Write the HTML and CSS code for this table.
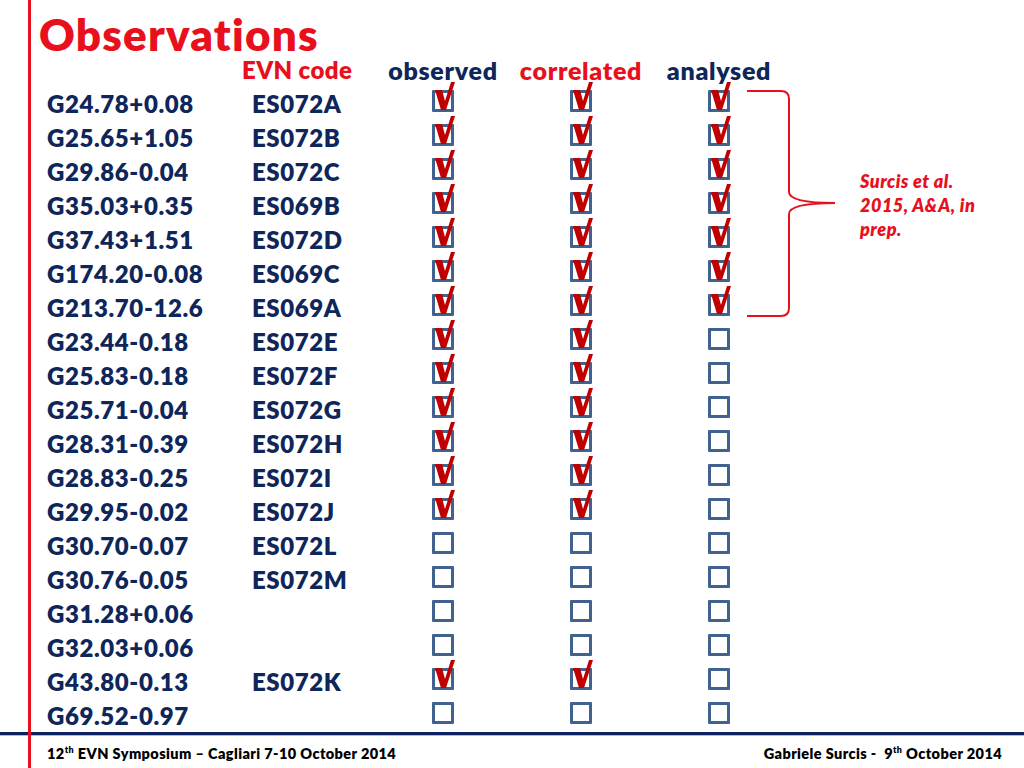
FILE: index.html
```html
<!DOCTYPE html>
<html>
<head>
<meta charset="utf-8">
<link rel="stylesheet" href="styles.css">
</head>
<body>
<div class="slide">
  <div class="redline"></div>
  <main class="content">
    <h1 class="title">Observations</h1>
    <div class="table">
      <div class="hd name"></div>
      <div class="hd code red evn">EVN code</div>
      <div class="hd c1">observed</div>
      <div class="hd c2 red">correlated</div>
      <div class="hd c3">analysed</div>

      <div class="note">
        <svg class="brace" width="90" height="238" viewBox="0 0 90 238">
          <path d="M0,5 H34 Q42,5 42,13 V106 Q42,117 88,117 Q42,117 42,128 V222 Q42,230 34,230 H0" fill="none" stroke="#e8101c" stroke-width="2"/>
        </svg>
        <p class="ref">Surcis et al.<br>2015, A&amp;A, in<br>prep.</p>
      </div>
    </div>
  </main>
  <footer class="footer">
    <span>12<sup>th</sup> EVN Symposium – Cagliari 7-10 October 2014</span>
    <span>Gabriele Surcis -&nbsp; 9<sup>th</sup> October 2014</span>
  </footer>
</div>
<script src="app.js"></script>
</body>
</html>
```
FILE: app.js
```js
const rows = [
  ["G24.78+0.08","ES072A",1,1,1],
  ["G25.65+1.05","ES072B",1,1,1],
  ["G29.86-0.04","ES072C",1,1,1],
  ["G35.03+0.35","ES069B",1,1,1],
  ["G37.43+1.51","ES072D",1,1,1],
  ["G174.20-0.08","ES069C",1,1,1],
  ["G213.70-12.6","ES069A",1,1,1],
  ["G23.44-0.18","ES072E",1,1,0],
  ["G25.83-0.18","ES072F",1,1,0],
  ["G25.71-0.04","ES072G",1,1,0],
  ["G28.31-0.39","ES072H",1,1,0],
  ["G28.83-0.25","ES072I",1,1,0],
  ["G29.95-0.02","ES072J",1,1,0],
  ["G30.70-0.07","ES072L",0,0,0],
  ["G30.76-0.05","ES072M",0,0,0],
  ["G31.28+0.06","",0,0,0],
  ["G32.03+0.06","",0,0,0],
  ["G43.80-0.13","ES072K",1,1,0],
  ["G69.52-0.97","",0,0,0]
];
const table = document.querySelector('.table');
const check = '<svg class="tick" width="20" height="28" viewBox="0 0 20 28"><polygon points="0,8 7,8 10,19 16,0 20,0 11,28 6,28" fill="#c00000"/></svg>';
rows.forEach(r => {
  let html = `<div class="cell name">${r[0]}</div><div class="cell code">${r[1]}</div>`;
  for (let i = 0; i < 3; i++) {
    html += `<div class="cell c${i+1}"><span class="box">${r[2+i] ? check : ''}</span></div>`;
  }
  table.insertAdjacentHTML('beforeend', html);
});
```
FILE: styles.css
```css
html, body {
  margin: 0;
  padding: 0;
  background: #fff;
}
.slide {
  position: relative;
  width: 1024px;
  height: 768px;
  overflow: hidden;
  font-family: Lato, "Open Sans", sans-serif;
  font-weight: 800;
  color: #0e2659;
  display: flex;
  flex-direction: column;
}
.redline {
  position: absolute;
  left: 28px;
  top: 0;
  width: 3px;
  height: 768px;
  background: #e8101c;
  z-index: 2;
}
.content {
  padding-left: 47px;
  height: 732px;
}
.title {
  margin: 15px 0 0 -8px;
  height: 45px;
  font-size: 44px;
  line-height: 38px;
  font-weight: 800;
  color: #e8101c;
  letter-spacing: 1.2px;
  white-space: nowrap;
}
.table {
  display: grid;
  grid-template-columns: 205px 122px 138px 138px 138px 1fr;
  grid-template-rows: 26px;
  grid-auto-rows: 34px;
  font-size: 24px;
  letter-spacing: 0.6px;
}
.hd {
  font-size: 25px;
  line-height: 20px;
  letter-spacing: 0.7px;
  white-space: nowrap;
}
.red { color: #e8101c; }
.evn {
  margin-left: -10px;
  font-size: 24px;
  letter-spacing: 0.4px;
}
.name { grid-column: 1; }
.code { grid-column: 2; }
.c1 { grid-column: 3; }
.c2 { grid-column: 4; }
.c3 { grid-column: 5; }
.c1, .c2, .c3 {
  display: flex;
  justify-content: center;
}
.cell {
  display: flex;
  align-items: center;
  white-space: nowrap;
}
.cell.c1, .cell.c2, .cell.c3 {
  justify-content: center;
  align-items: flex-start;
  padding-top: 4px;
  box-sizing: border-box;
}
.box {
  position: relative;
  width: 22px;
  height: 22px;
  box-sizing: border-box;
  border: 3px solid #41628f;
  border-radius: 1px;
}
.tick {
  position: absolute;
  left: 0;
  top: -11px;
}
.note {
  grid-column: 6;
  grid-row: 2 / span 7;
  margin-left: -41px;
  display: flex;
  align-items: center;
}
.brace { flex: none; }
.ref {
  margin: 0 0 0 23px;
  font-size: 18px;
  line-height: 24px;
  letter-spacing: 0.5px;
  font-style: italic;
  color: #e8101c;
  white-space: nowrap;
}
.footer {
  border-top: 3px solid #0c2260;
  box-shadow: 0 1px 0 #a9bddc inset;
  height: 36px;
  box-sizing: border-box;
  display: flex;
  justify-content: space-between;
  align-items: center;
  padding: 3px 22px 0 47px;
  font-size: 14.5px;
  letter-spacing: 0.4px;
  color: #000;
}
.footer sup {
  font-size: 9px;
  vertical-align: 6px;
  line-height: 0;
}
```
